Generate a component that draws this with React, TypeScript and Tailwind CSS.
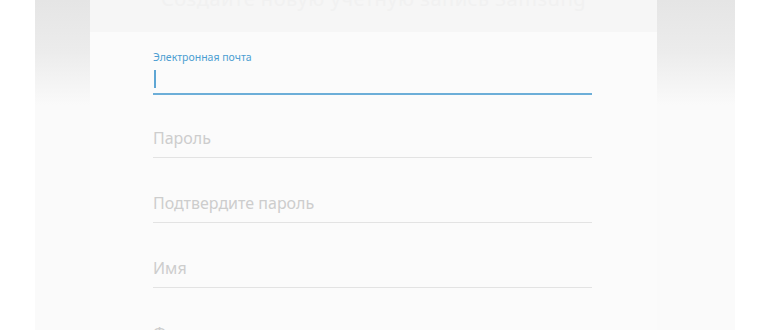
import React from "react";

const font = { fontFamily: '"Noto Sans", "Open Sans", sans-serif' };

function Field({ placeholder, h = "h-[65px]" }: { placeholder: string; h?: string }) {
  return (
    <div className={`${h} shrink-0 flex flex-col justify-end`}>
      <div className="h-[30px] border-b border-[#e3e3e3] flex items-start">
        <span className="text-[16px] leading-[20px] text-[#cdcdcd]">{placeholder}</span>
      </div>
    </div>
  );
}

export default function App() {
  return (
    <div className="w-[770px] h-[330px] overflow-hidden bg-white px-[35px] flex" style={font}>
      <div className="flex-1 bg-[#fafafa] flex">
        <div className="w-[55px] h-[105px] shrink-0 bg-gradient-to-b from-[#e5e5e5] via-[#ececec] to-[#fafafa]" />
        <div className="flex-1 flex flex-col overflow-hidden">
          <div className="h-[32px] shrink-0 bg-[#f6f6f6] overflow-hidden flex justify-center">
            <span className="text-[20px] leading-[20px] -mt-[11px] text-[#f1f1f1] tracking-wide whitespace-nowrap">
              Создайте новую учётную запись Samsung
            </span>
          </div>
          <div className="bg-[#fbfbfb] flex-1 pl-[63px] pr-[65px] pt-[18px] flex flex-col">
            <div className="flex flex-col shrink-0">
              <span className="text-[10.5px] leading-[14px] text-[#4c9ed2]">Электронная почта</span>
              <div className="h-[31px] border-b-2 border-[#6caed8] flex items-center pl-[1px]">
                <div className="w-[2px] h-[18px] bg-[#5ea6d4]" />
              </div>
            </div>
            <Field placeholder="Пароль" h="h-[63px]" />
            <Field placeholder="Подтвердите пароль" />
            <Field placeholder="Имя" />
            <Field placeholder="Фамилия" />
          </div>
        </div>
        <div className="w-[78px] h-[105px] shrink-0 bg-gradient-to-b from-[#e5e5e5] via-[#ececec] to-[#fafafa]" />
      </div>
    </div>
  );
}
